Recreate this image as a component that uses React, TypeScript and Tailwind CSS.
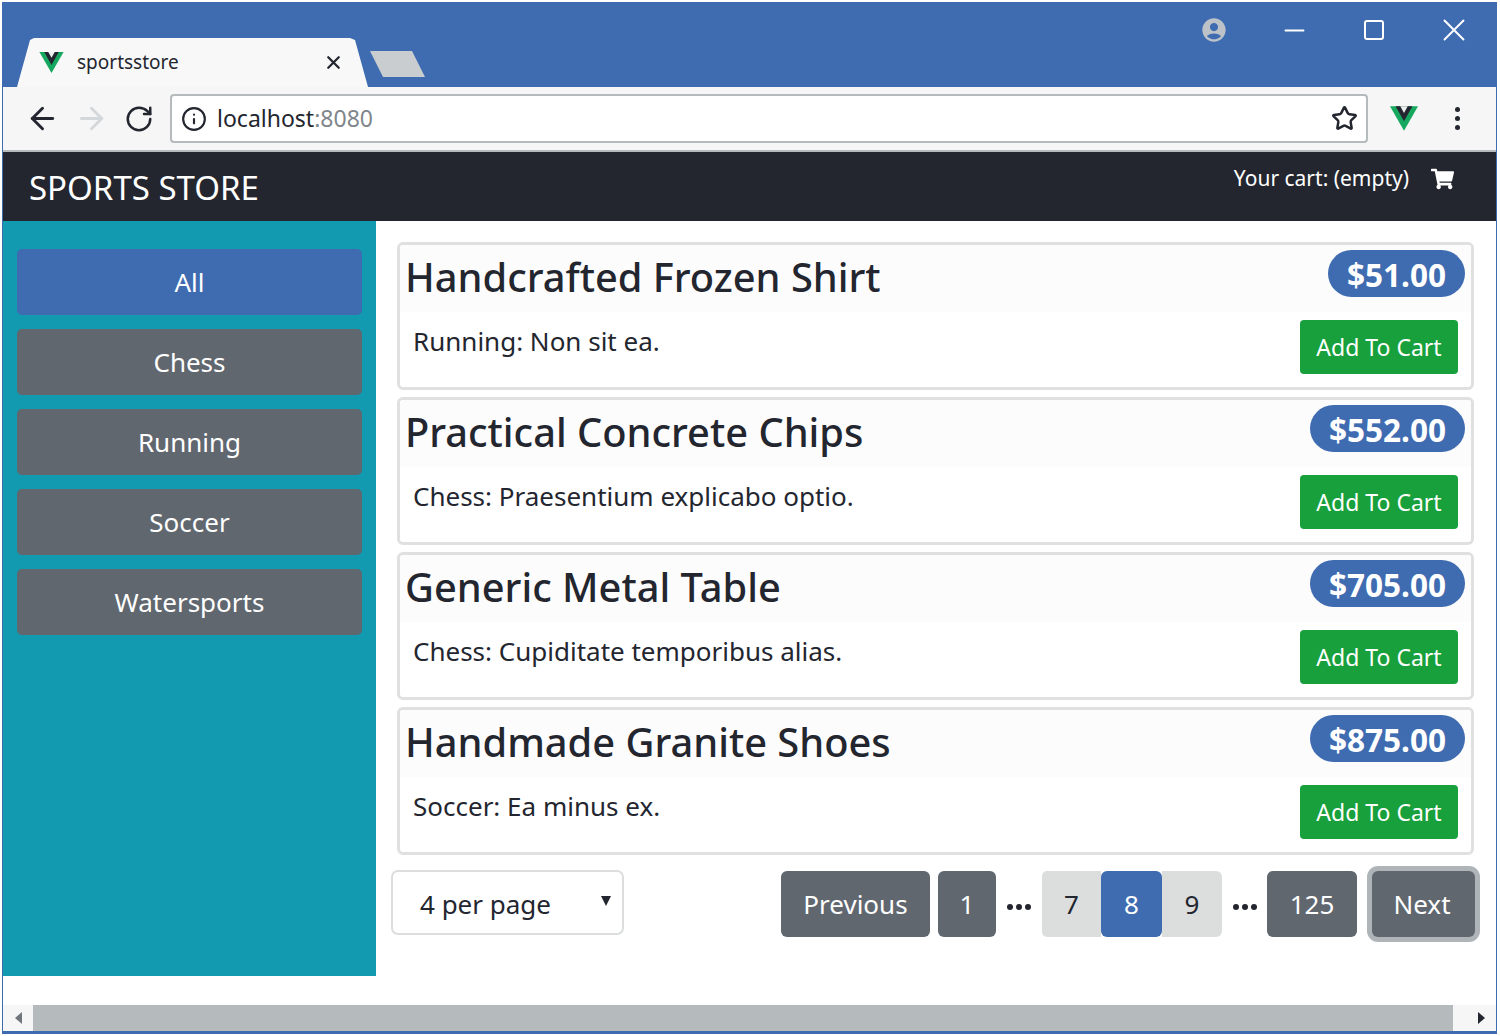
import React from 'react';
import { ArrowLeft, ArrowRight, RotateCw, Info, Star, X, Minus, Square } from 'lucide-react';
import { FaShoppingCart } from 'react-icons/fa';
import { MdAccountCircle } from 'react-icons/md';

const products = [
  { name: 'Handcrafted Frozen Shirt', price: '$51.00', desc: 'Running: Non sit ea.' },
  { name: 'Practical Concrete Chips', price: '$552.00', desc: 'Chess: Praesentium explicabo optio.' },
  { name: 'Generic Metal Table', price: '$705.00', desc: 'Chess: Cupiditate temporibus alias.' },
  { name: 'Handmade Granite Shoes', price: '$875.00', desc: 'Soccer: Ea minus ex.' },
];

const categories = ['All', 'Chess', 'Running', 'Soccer', 'Watersports'];

function VueLogo({ className }: { className?: string }) {
  return (
    <svg viewBox="0 0 30 26" className={className} aria-hidden>
      <polygon points="0,0 30,0 15,26" fill="#17a85f" />
      <polygon points="6,0 24,0 15,16" fill="#23262f" />
      <polygon points="11,0 19,0 15,7" fill="#eef0f0" />
    </svg>
  );
}

function Ellipsis({ className }: { className: string }) {
  return (
    <div className={`flex shrink-0 items-center justify-center gap-[3px] pt-[6px] ${className}`}>
      <span className="h-[6px] w-[6px] rounded-full bg-[#23262f]" />
      <span className="h-[6px] w-[6px] rounded-full bg-[#23262f]" />
      <span className="h-[6px] w-[6px] rounded-full bg-[#23262f]" />
    </div>
  );
}

export default function App() {
  return (
    <div className="h-[1036px] w-[1500px] overflow-hidden bg-white pl-[2px] pr-[3px] pt-[2px] font-['Noto_Sans','Open_Sans',sans-serif] text-[#23262f]">
      <div className="flex h-[1032px] w-full flex-col border-x border-b-[3px] border-[#3f6cb1] bg-white">
        {/* title bar */}
        <div className="flex h-[85px] shrink-0 items-end justify-between bg-[#3f6cb1] pl-[11px]">
          <div className="flex items-end">
            <div className="flex h-[49px] w-[356px] items-center bg-[#f8f8f8] pl-[25px] [clip-path:polygon(0_100%,3px_100%,16px_2px,20px_0,336px_0,341px_2px,354px_100%,356px_100%)]">
              <VueLogo className="h-[21px] w-[25px]" />
              <span className="ml-[13px] w-[246px] text-[19px] leading-none">sportsstore</span>
              <X className="h-[21px] w-[21px]" strokeWidth={2.6} />
            </div>
            <div className="mb-[10px] h-[26px] w-[55px] bg-[#c9cdd0] [clip-path:polygon(0_0,42px_0,55px_100%,13px_100%)]" />
          </div>
          <div className="mb-[41px] flex items-center pr-[2px] text-white">
            <div className="flex h-[32px] w-[80px] items-center justify-center">
              <MdAccountCircle className="h-[28px] w-[28px] text-[#bcc2c8]" />
            </div>
            <div className="flex h-[32px] w-[80px] items-center justify-center">
              <Minus className="h-[31px] w-[31px]" strokeWidth={1.4} />
            </div>
            <div className="flex h-[32px] w-[80px] items-center justify-center">
              <Square className="h-[24px] w-[24px]" strokeWidth={2} />
            </div>
            <div className="flex h-[32px] w-[80px] items-center justify-center">
              <X className="h-[38px] w-[38px]" strokeWidth={1.2} />
            </div>
          </div>
        </div>

        {/* browser toolbar */}
        <div className="flex h-[65px] shrink-0 items-center border-b-2 border-[#b5babd] bg-[#f6f6f6] pl-[22px]">
          <ArrowLeft className="h-[35px] w-[35px]" strokeWidth={2} />
          <ArrowRight className="ml-[14px] h-[35px] w-[35px] text-[#d5d8da]" strokeWidth={2} />
          <RotateCw className="ml-[15px] h-[30px] w-[30px]" strokeWidth={2} />
          <div className="ml-[16px] flex h-[49px] w-[1198px] items-center rounded-[4px] border-2 border-[#b5babd] bg-white pl-[9px] pr-[8px]">
            <Info className="h-[26px] w-[26px]" strokeWidth={2} />
            <span className="ml-[10px] flex-1 text-[23px] leading-none">
              localhost<span className="text-[#80868b]">:8080</span>
            </span>
            <Star className="h-[27px] w-[27px]" strokeWidth={2.2} />
          </div>
          <VueLogo className="ml-[22px] h-[25px] w-[28px]" />
          <div className="ml-[37px] flex flex-col gap-[4px]">
            <span className="h-[5px] w-[5px] rounded-full bg-[#23262f]" />
            <span className="h-[5px] w-[5px] rounded-full bg-[#23262f]" />
            <span className="h-[5px] w-[5px] rounded-full bg-[#23262f]" />
          </div>
        </div>

        {/* store navbar */}
        <div className="flex h-[69px] shrink-0 items-center justify-between bg-[#23262f] pl-[26px] text-white">
          <span className="pt-[2px] text-[33px] leading-none">SPORTS STORE</span>
          <div className="mb-[17px] flex items-center pr-[42px]">
            <span className="text-[21px] leading-none">Your cart: (empty)</span>
            <FaShoppingCart className="ml-[22px] mt-[2px] h-[22px] w-[23px]" />
          </div>
        </div>

        {/* sidebar and products */}
        <div className="flex h-[755px] shrink-0">
          <div className="flex w-[373px] shrink-0 flex-col gap-[14px] bg-[#119ab0] px-[14px] pt-[28px]">
            {categories.map((c, i) => (
              <div
                key={c}
                className={`flex h-[66px] items-center justify-center rounded-[5px] text-[26px] text-white ${i === 0 ? 'bg-[#3f6cb1]' : 'bg-[#61676f]'}`}
              >
                {c}
              </div>
            ))}
          </div>
          <div className="flex flex-1 flex-col gap-[7px] pl-[21px] pr-[22px] pt-[21px]">
            {products.map((p) => (
              <div key={p.name} className="flex h-[148px] flex-col overflow-hidden rounded-[6px] border-[3px] border-[#e0e0e0]">
                <div className="flex h-[67px] justify-between bg-[#fcfcfc] pl-[5px] pr-[6px] pt-[5px]">
                  <h2 className="pt-[2px] text-[39.8px] font-medium leading-[50px]">{p.name}</h2>
                  <span className="flex h-[47px] items-center rounded-full bg-[#3f6cb1] px-[19px] pt-[2px] text-[31.5px] font-bold leading-none text-white">
                    {p.price}
                  </span>
                </div>
                <div className="flex items-start justify-between pl-[13px] pr-[13px] pt-[8px]">
                  <p className="pt-[3px] text-[26px] leading-[36px]">{p.desc}</p>
                  <div className="flex h-[54px] w-[158px] items-center justify-center rounded-[4px] bg-[#17a03b] text-[23px] text-white">
                    Add To Cart
                  </div>
                </div>
              </div>
            ))}
            <div className="-ml-[6px] mt-[6px] flex h-[71px] items-center justify-between">
              <div className="relative mb-[2px] flex h-[65px] w-[233px] items-center rounded-[7px] border-2 border-[#dcdddd] pl-[27px] pt-[4px] text-[26px]">
                4 per page
                <span className="absolute right-[11px] top-[24px] h-0 w-0 border-x-[5px] border-t-[10px] border-x-transparent border-t-[#23262f]" />
              </div>
              <div className="-mr-[1px] flex items-center text-[26px] text-white">
                <div className="flex h-[66px] w-[149px] items-center justify-center rounded-[6px] bg-[#61676f] pt-[2px]">Previous</div>
                <div className="ml-[8px] flex h-[66px] w-[58px] items-center justify-center rounded-[6px] bg-[#61676f] pt-[2px]">1</div>
                <Ellipsis className="w-[46px]" />
                <div className="flex h-[66px] w-[59px] items-center justify-center rounded-l-[5px] bg-[#dcdddd] pt-[2px] text-[#23262f]">7</div>
                <div className="flex h-[66px] w-[61px] items-center justify-center rounded-[6px] bg-[#3f6cb1] pt-[2px]">8</div>
                <div className="flex h-[66px] w-[60px] items-center justify-center rounded-r-[6px] bg-[#dcdddd] pt-[2px] text-[#23262f]">9</div>
                <Ellipsis className="w-[45px]" />
                <div className="flex h-[66px] w-[90px] items-center justify-center rounded-[6px] bg-[#61676f] pt-[2px]">125</div>
                <div className="ml-[15px] flex h-[66px] w-[103px] items-center justify-center rounded-[6px] bg-[#61676f] pr-[3px] pt-[2px] ring-[5px] ring-[#aeb4b8]">Next</div>
              </div>
            </div>
          </div>
        </div>

        {/* horizontal scrollbar */}
        <div className="mt-auto flex h-[26px] shrink-0 bg-[#f6f6f6]">
          <div className="flex w-[30px] items-center justify-center">
            <span className="h-0 w-0 border-y-[6px] border-r-[7px] border-y-transparent border-r-[#70767c]" />
          </div>
          <div className="flex-1 bg-[#b5babd]" />
          <div className="flex w-[43px] items-center justify-center pl-[14px]">
            <span className="h-0 w-0 border-y-[6px] border-l-[7px] border-y-transparent border-l-[#23262f]" />
          </div>
        </div>
      </div>
    </div>
  );
}
